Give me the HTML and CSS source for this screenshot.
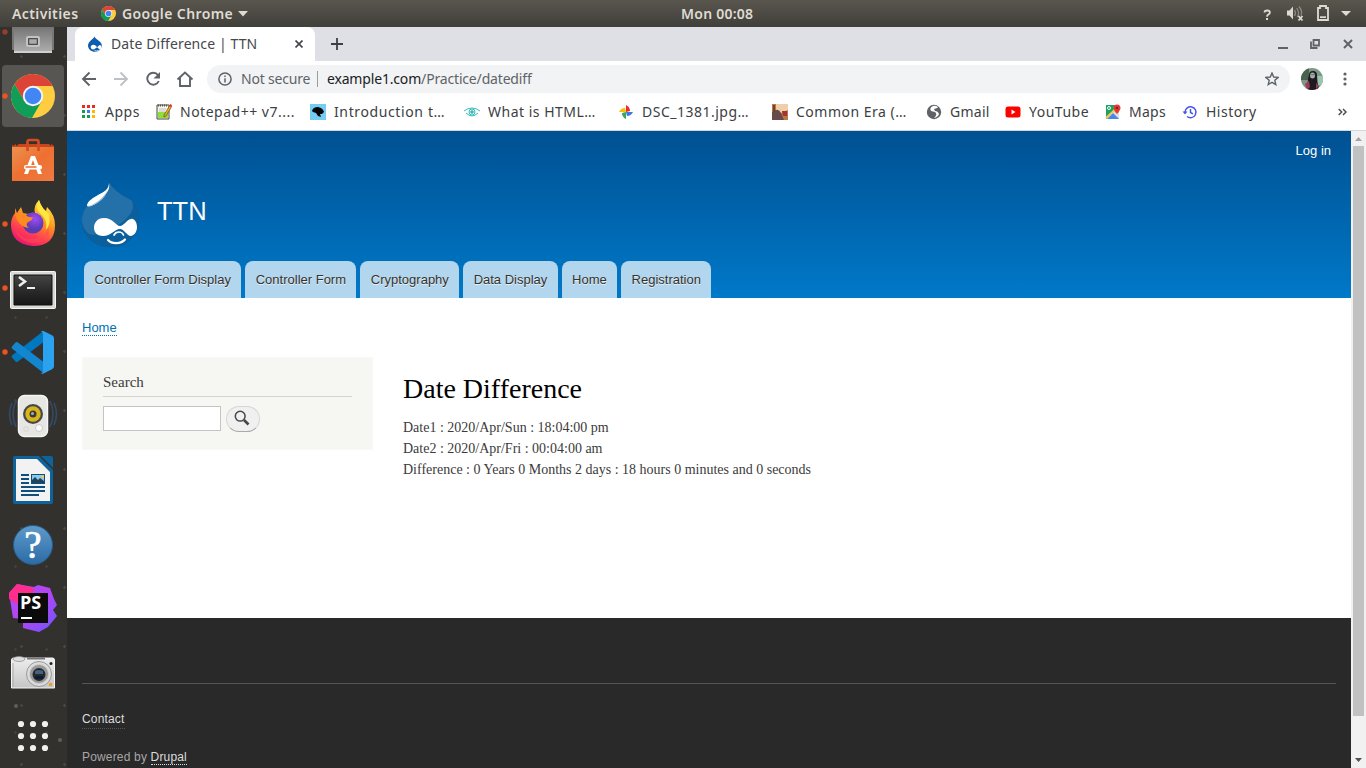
FILE: index.html
```html
<!DOCTYPE html>
<html lang="en">
<head>
<meta charset="utf-8">
<title>Date Difference | TTN</title>
<link rel="stylesheet" href="styles.css">
</head>
<body>
<svg width="0" height="0" class="defs">
  <defs>
    <linearGradient id="gBag" x2="1" y2="1"><stop offset="0" stop-color="#eb9150"/><stop offset=".5" stop-color="#ee7030"/><stop offset="1" stop-color="#ed7a45"/></linearGradient>
    <linearGradient id="gFox" x1=".8" y1="0" x2=".3" y2="1"><stop offset="0" stop-color="#fff44f"/><stop offset=".4" stop-color="#ff9a1f"/><stop offset=".72" stop-color="#ff4050"/><stop offset="1" stop-color="#e81275"/></linearGradient>
    <radialGradient id="gOrb" cx=".6" cy=".3"><stop offset="0" stop-color="#a04cf5"/><stop offset="1" stop-color="#5a3ab5"/></radialGradient>
    <linearGradient id="gTerm" x2="0" y2="1"><stop offset="0" stop-color="#454545"/><stop offset=".5" stop-color="#2b2b2b"/><stop offset="1" stop-color="#161616"/></linearGradient>
    <linearGradient id="gHelp" x2="0" y2="1"><stop offset="0" stop-color="#5e9bcb"/><stop offset="1" stop-color="#2b6ba6"/></linearGradient>
    <linearGradient id="gCam" x2="0" y2="1"><stop offset="0" stop-color="#eee"/><stop offset="1" stop-color="#c5c5c5"/></linearGradient>
    <linearGradient id="gPs" x2="1" y2="1"><stop offset="0" stop-color="#a94df5"/><stop offset=".5" stop-color="#b345f1"/><stop offset="1" stop-color="#6b57ff"/></linearGradient>
    <linearGradient id="gFile" x2="0" y2="1"><stop offset="0" stop-color="#656565"/><stop offset="1" stop-color="#b0b0b0"/></linearGradient>
    <symbol id="chrome" viewBox="0 0 44 44">
      <circle cx="22" cy="22" r="22" fill="#ffcd40"/>
      <path d="M13.300 27 3.700 10A22 22 0 0 0 21 44L30.700 27 22 32Z" fill="#109d58"/>
      <path d="M13.300 27 3.700 10A22 22 0 0 1 41.600 12H22Z" fill="#db4437"/>
      <circle cx="22" cy="22" r="10.200" fill="#f5f5f5"/><circle cx="22" cy="22" r="8.300" fill="#4285f4"/>
    </symbol>
    <symbol id="drop" viewBox="0 0 58 65">
      <path d="M27 1C27 10 18 12 11 18 4 24 0 30 0 38 0 54 13 65 29 65S57 53 57 37C57 27 51 19 44 15 36 10 29 9 27 1Z" fill="#0a5f9c" stroke="#16598d" stroke-width=".6"/>
      <path d="M27 1C27 10 18 12 11 18 4 24 0 30 0 38 0 44 3 49 7 52C14 55 29 49 38 42 49 34 53 26 50 19 47 16 36 13 27 1Z" fill="#2470a9"/>
      <path d="M27 1C27 7 22 10 16 13 9 17 5 20 5 24 9 26 17 20 22 14 26 10 28 6 27 1Z" fill="#fff"/>
      <path d="M5 24c7 0 17-9 20-15-1 8-13 16-20 15Z" fill="#a5c3db"/>
      <path d="M22 36C15 36 12 41 12 46s4 8 9 8c8 0 12-7 17-7 4 0 7 7 11 7 4-1 6-5 6-9 0-5-3-9-6-8-5 1-7 7-11 7S31 36 22 36Z" fill="#fff"/>
      <path d="M32 53c2-4 8-4 9.500 0" fill="none" stroke="#fff" stroke-width="1.700" stroke-linecap="round"/>
      <path d="M26 58c4 4.500 13 4 17-.5" fill="none" stroke="#fff" stroke-width="2.200" stroke-linecap="round"/>
    </symbol>
  </defs>
</svg>

<header class="topbar">
  <span class="activities">Activities</span>
  <svg class="app-icon" width="15" height="15"><use href="#chrome"/></svg>
  <span class="app-name">Google Chrome</span>
  <svg class="caret" width="10" height="6"><path d="M0 0h10L5 5.500Z"/></svg>
  <span class="clock">Mon 00:08</span>
  <svg class="tray" width="106" height="27" viewBox="1260 0 106 27">
    <path d="M1264.500 12.500q0-2 2.700-2t2.700 2.100q0 1.500-2 2.200-.8.400-.8 2" fill="none" stroke="#dfdbd2" stroke-width="1.800"/><path d="M1266 18h2v2h-2z" fill="#dfdbd2"/>
    <path d="M1287 10.500h2.500l3.500-4V19.500l-3.500-4H1287z" fill="#dfdbd2"/>
    <path d="M1294.500 10q2 3 0 6M1296.700 8q3.500 5 .5 9M1299 6.500q4 5 2 9" fill="none" stroke="#8c8982" stroke-width="1.300"/>
    <path d="M1298.500 16l4 4.500m0-4.500l-4 4.500" stroke="#dfdbd2" stroke-width="1.800"/>
    <path d="M1318 8h2V6h6v2h2v12h-10z" fill="none" stroke="#dfdbd2" stroke-width="1.800"/><path d="M1320 16.300h6v1.700h-6z" fill="#dfdbd2"/>
    <path d="M1341 11h10l-5 5z" fill="#dfdbd2"/>
  </svg>
</header>

<div class="desktop">
  <nav class="dock">
    <svg viewBox="0 0 67 64"><circle cx="5" cy="32" r="2.700" fill="#8f4129"/><path d="M12 20h42v30H12z" fill="#777"/><path d="M14 20h38v33H14z" fill="url(#gFile)"/><path d="M14 51h38v2H14z" fill="#d0d0d0"/><rect x="26" y="36" width="14" height="11" rx="2" fill="#c2c2c2"/><rect x="28.700" y="38.700" width="8.600" height="5.600" fill="#aaa" stroke="#333" stroke-width="1"/></svg>
    <svg viewBox="0 0 67 64"><rect x="2" y="1" width="62" height="62" rx="4" fill="#585653"/><circle cx="5" cy="32" r="2.700" fill="#e95420"/><use href="#chrome" x="11" y="10" width="44" height="44"/></svg>
    <svg viewBox="0 0 67 64"><path d="M12 18l1-2v2l3-2v2l3-2h30l2 2v-2l3 2v2H12z" fill="#c8441d"/><path d="M12 19h42v34H12z" fill="url(#gBag)"/><path d="M27.500 23V14q0-2 2-2h7q2 0 2 2v9" fill="none" stroke="#d24d22" stroke-width="2.700"/><path d="M31 28h4l7 18h-4l-5-14-5 14h-4z" fill="#fff"/><rect x="24" y="37" width="18" height="4.500" rx="2" fill="#fff"/><path d="M25.500 39h11" stroke="#ed6a30" stroke-width="1.500"/></svg>
    <svg viewBox="0 0 67 64"><circle cx="5" cy="32" r="2.700" fill="#e95420"/><path d="M15 16l2 5q2-3 4-6l2 6 5 1q4-2 7-1-2-7 4-13 1 7 7 11l1-4q8 8 8 18Q55 54 33 54 11 52 11 33q0-7 4-12z" fill="url(#gFox)"/><circle cx="33" cy="31" r="10.500" fill="url(#gOrb)"/><path d="M15 22q5-2 10 0 3 4 8 3-1 4-5 5-3 3 1 6-8-1-12-8z" fill="#ff8a22"/><path d="M14 34q6 14 19 13Q47 46 48 33q5 17-14 18Q18 51 14 34Z" fill="#ff4b50" opacity=".5"/><path d="M39 8q-5 9 2 14 7 6 5 16 5-5 3-16-7-5-10-14Z" fill="#ffe640"/></svg>
    <svg viewBox="0 0 67 64"><circle cx="5" cy="32" r="2.700" fill="#e95420"/><rect x="10.500" y="15.500" width="45" height="37" rx="1" fill="#d8d8d5" stroke="#f5f5f5"/><path d="M14 19h38v30H14z" fill="url(#gTerm)" stroke="#111"/><path d="M19 25l6 4.500-6 4.500" fill="none" stroke="#eee" stroke-width="2.500" transform="translate(0 -4)"/><path d="M27 31h8v2h-8z" fill="#eee"/></svg>
    <svg viewBox="0 0 67 64"><circle cx="5" cy="32" r="2.700" fill="#e95420"/><path d="M12 37.500l3.500 4q1 1 2.500 0L43.500 22V11L12 35.500q-1 1 0 2Z" fill="#0078bf"/><path d="M12 26.500l3.500-4q1-1 2.500 0L43.500 42v11L12 28.500q-1-1 0-2Z" fill="#1287cf"/><path d="M41 11.500q1-1 3-.3l8 4q2 1 2 3v28q0 2-2 3l-8 4q-2 1-3 0 2 0 2-3V14q0-2-2-2.500Z" fill="#2ba2f0"/></svg>
    <svg viewBox="0 0 67 64"><path d="M16 17q-6 13 0 26M12 19q-5 11 0 22M50 17q6 13 0 26M54 19q5 11 0 22" fill="none" stroke="#344a62" stroke-width="1.700"/><rect x="18.500" y="11.500" width="29" height="41" rx="6" fill="#e6e6e3" stroke="#f6f6f6" stroke-width="1.500"/><circle cx="33" cy="30" r="10" fill="#484848"/><circle cx="33" cy="30" r="7.700" fill="#d9b51c"/><circle cx="33" cy="30" r="3.500" fill="#3a3a3a"/><circle cx="32.500" cy="29.500" r="1.500" fill="#aaa"/><circle cx="39" cy="44" r="3.500" fill="#fafafa" stroke="#bbb" stroke-width=".7"/><path d="M24 43h4v4h-4z" fill="none" stroke="#d6d6d4"/></svg>
    <svg viewBox="0 0 67 64"><path d="M15 8h24l14 14v32q0 2-2 2H15q-2 0-2-2V10q0-2 2-2Z" fill="#0e639b"/><path d="M16 11h21l13 13v29H16z" fill="#f2f2f2"/><path d="M41 8h10q2 0 2 2v10z" fill="#0e639b"/><path d="M21 27h8M21 31h8M21 35h8M21 39h24M21 43h24M21 47h18" stroke="#104f7d" stroke-width="1.900"/><path d="M31 26h14v10H31z" fill="#104f7d"/><path d="M32 27h12v8H32z" fill="#8ac8ed"/><path d="M32 35v-3l3-3 3 3 2-2 4 3v2z" fill="#20435d"/><circle cx="42.500" cy="28.500" r="1.500" fill="#f1c84b"/></svg>
    <svg viewBox="0 0 67 64"><circle cx="33" cy="33" r="19.500" fill="url(#gHelp)" stroke="#275d8d"/><text x="33" y="46" class="help-mark">?</text></svg>
    <svg viewBox="0 0 67 64"><path d="M9 17l8-9 17 3 4-2 12 3 4 11 3 6-4 5 4 6-9 11-9 5-16-4V43l-10-1z" fill="url(#gPs)"/><path d="M9 17l8-9 17 4-2 7-14 9-9-5z" fill="#ff2d8b"/><path d="M18 17h30v30H18z" fill="#0b0b0b"/><text x="20" y="33" class="ps-mark">PS</text><path d="M21 41h11v2H21z" fill="#fff"/></svg>
    <svg viewBox="0 0 67 64"><path d="M11.500 20q0-2 2-2h39q2 0 2 2v28H11.500z" fill="url(#gCam)" stroke="#f5f5f5"/><path d="M27 17.500h18v2H27z" fill="#777"/><ellipse cx="19" cy="19" rx="6" ry="2.500" fill="#ddd" stroke="#888" stroke-width=".7"/><circle cx="39" cy="34" r="12.500" fill="#ddd" stroke="#999"/><circle cx="39" cy="34" r="9.500" fill="#999" stroke="#ccc"/><circle cx="39" cy="34.500" r="6.500" fill="#292929"/><path d="M35 31q4-2 8 0v3h-8z" fill="#3e6386"/><path d="M35 36h8v3h-8z" fill="#0a1c39"/><circle cx="51" cy="23.500" r="1.500" fill="#222"/><path d="M49 43h3v3h-3z" fill="#e9a12b"/><path d="M13 23v24" stroke="#aaa"/></svg>
    <svg viewBox="0 0 67 64"><g fill="#f0f0ee"><circle cx="21" cy="20" r="3.100"/><circle cx="33" cy="20" r="3.100"/><circle cx="45" cy="20" r="3.100"/><circle cx="21" cy="32" r="3.100"/><circle cx="33" cy="32" r="3.100"/><circle cx="45" cy="32" r="3.100"/><circle cx="21" cy="44" r="3.100"/><circle cx="33" cy="44" r="3.100"/><circle cx="45" cy="44" r="3.100"/></g><circle cx="16" cy="2" r="2" fill="#625d57"/><circle cx="60" cy="36" r="2" fill="#625d57"/></svg>
  </nav>

  <div class="window">
    <div class="tabstrip">
      <div class="tab">
        <svg width="14" height="16" viewBox="0 0 58 65"><path d="M27 0C27 10 0 20 0 38 0 54 13 65 29 65S57 53 57 37C57 20 30 14 27 0Z" fill="#0b5fae"/><path d="M22 36c-14 0-14 19-1 19 8 0 12-9 17-8 4 0 7 8 11 8 9-1 8-18 0-18-5 1-7 8-11 8S31 36 22 36Z" fill="#fff"/><path d="M27 60q9 3 17-1" stroke="#fff" stroke-width="3" fill="none"/></svg>
        <span class="tab-title">Date Difference | TTN</span>
        <svg class="tab-close" width="8" height="8"><path d="M.5.500l7 7m0-7l-7 7" stroke="#45484c" stroke-width="1.700"/></svg>
      </div>
      <svg class="new-tab" width="12" height="12"><path d="M6 0v12M0 6h12" stroke="#3c4043" stroke-width="1.800"/></svg>
      <svg class="win-buttons" width="90" height="34" viewBox="1276 27 90 34"><path d="M1278 48h10" stroke="#5f6368" stroke-width="2"/><path d="M1313.500 40h5.500v5.500h-5.500zM1311 41.500v6.500h6.500" fill="none" stroke="#5f6368" stroke-width="1.800"/><path d="M1344 40l8 8m0-8l-8 8" stroke="#5f6368" stroke-width="2"/></svg>
    </div>

    <div class="toolbar">
      <svg class="nav-icons" width="130" height="36" viewBox="77 61 130 36" fill="none" stroke="#5f6368" stroke-width="1.900"><path d="M96 79H83.500M89.500 72.500L83 79l6.500 6.500"/><path d="M114 79h12.500M120.500 72.500L127 79l-6.500 6.500" stroke="#bdc1c6"/><path d="M158 75a6 6 0 1 0 .8 6"/><path d="M160 72v6.500h-6.500z" fill="#5f6368" stroke="none"/><path d="M177.500 79.500l7.500-7 7.500 7M180 78v8h10v-8" /></svg>
      <div class="omnibox">
        <svg class="info" width="14" height="14" fill="none" stroke="#5f6368" stroke-width="1.500"><circle cx="7" cy="7" r="6.100"/><path d="M7 6.200v4.300M7 3.500v1.500"/></svg>
        <span class="secure">Not secure</span>
        <span class="url"><b>example1.com</b>/Practice/datediff</span>
        <svg class="star" width="14" height="14" viewBox="0 0 14 14"><path d="M7 1l1.700 4 4.500.4-3.400 2.900 1 4.300L7 10.300 3.200 12.600l1-4.300L.8 5.400 5.300 5z" fill="none" stroke="#5f6368" stroke-width="1.400"/></svg>
      </div>
      <svg class="avatar" width="22" height="22" viewBox="0 0 22 22"><clipPath id="av"><circle cx="11" cy="11" r="11"/></clipPath><g clip-path="url(#av)"><path d="M0 0h22v22H0z" fill="#7d9784"/><path d="M0 0h8v12H0z" fill="#49634f"/><path d="M15 8h7v9h-7z" fill="#9cc4b0"/><path d="M7 22Q6 13 8 7q0-4 4-4t4 4q0 7 2 15z" fill="#1f1a20"/><ellipse cx="11.500" cy="7.500" rx="2.500" ry="3" fill="#b3a7a2"/><path d="M9 6h5v1.300H9z" fill="#4b8da0"/><path d="M4 16l4-3 1 6-3 3zM15 15l3 3-3 3z" fill="#9c3b5c"/></g></svg>
      <svg class="dots" width="4" height="14" fill="#5f6368"><circle cx="2" cy="2" r="1.600"/><circle cx="2" cy="7" r="1.600"/><circle cx="2" cy="12" r="1.600"/></svg>
    </div>

    <div class="bookmarks">
      <span class="bm w-apps"><svg viewBox="0 0 16 16"><path d="M1 1h3v3H1zM6 1h3v3H6zM11 1h3v3h-3z" fill="#e82c24"/><path d="M1 6h3v3H1zM1 11h3v3H1zM6 11h3v3H6z" fill="#149b51"/><path d="M6 6h3v3H6z" fill="#3b7ded"/><path d="M11 6h3v3h-3zM11 11h3v3h-3z" fill="#f7b90a"/></svg><i>Apps</i></span>
      <span class="bm w-note"><svg viewBox="0 0 16 16"><path d="M1 1h12v14H1z" fill="#f5f5e8" stroke="#444"/><path d="M2 8h10v6H2z" fill="#8ede3c"/><path d="M2 1.500h10" stroke="#555" stroke-width="2" stroke-dasharray="1 1"/><path d="M3 5h7M3 7h6" stroke="#aaa" stroke-width=".7"/><path d="M14 1l2 1-6 10-2 1V11z" fill="#e7ae22" stroke="#5b3b1b" stroke-width=".6"/><path d="M14 0l2 1-1 2-2-1z" fill="#e33"/></svg><i>Notepad++ v7....</i></span>
      <span class="bm w-intro"><svg viewBox="0 0 16 16"><path d="M0 0h16v16H0z" fill="#73cdf5"/><path d="M2 7q1-4 6-4 5 1 6 5l-2 2-2 0 1 3-3-1-2-3-3-1z" fill="#050505"/></svg><i>Introduction t…</i></span>
      <span class="bm w-html"><svg viewBox="0 0 16 16" fill="none" stroke="#36bdb9"><path d="M0 7q8-6 16 0M2 9q6 6 12 0"/><circle cx="8" cy="8" r="3"/><circle cx="8" cy="8" r="1.300" fill="#36bdb9"/></svg><i>What is HTML…</i></span>
      <span class="bm w-dsc"><svg viewBox="0 0 16 16"><path d="M8 8V1q4 2 4 6z" fill="#ea2e26"/><path d="M8 8h7q-2 4-6 4z" fill="#3b79e8"/><path d="M8 8v7q-4-2-4-6z" fill="#38a852"/><path d="M8 8H1q2-4 6-4z" fill="#fbbc05"/></svg><i>DSC_1381.jpg…</i></span>
      <span class="bm w-era"><svg viewBox="0 0 16 16"><path d="M0 0h16v16H0z" fill="#b77b49"/><path d="M4 0h12v6L9 9 4 6z" fill="#edcfaa"/><path d="M0 8q6-5 9 1l3 7H0z" fill="#674a49"/><path d="M10 7h5v5h-4z" fill="#a83232"/><path d="M1 1h2v7H1z" fill="#744126"/></svg><i>Common Era (…</i></span>
      <span class="bm w-gmail"><svg viewBox="0 0 16 16"><circle cx="8" cy="8" r="7.200" fill="#5f6368"/><path d="M7 2Q3 4 5 7l4 1q3 2-1 6 4-1 5-4-1-3-4-3L8 5q4-1 4-2-3-2-5-1z" fill="#fff"/></svg><i>Gmail</i></span>
      <span class="bm w-tube"><svg viewBox="0 0 16 16"><rect x=".5" y="2.500" width="15" height="11" rx="2.500" fill="#f00"/><path d="M6.500 5.500l4 2.500-4 2.500z" fill="#fff"/></svg><i>YouTube</i></span>
      <span class="bm w-maps"><svg viewBox="0 0 16 16"><path d="M1 1h13v14H1z" fill="#dedede"/><path d="M1 1h9L8 8l-7 7z" fill="#1ca261"/><path d="M2 15l6-6 6 6z" fill="#4886ed"/><path d="M1 14L13 3" stroke="#f7cb4b" stroke-width="2"/><path d="M12 10Q8.500 6 8.500 4a3.500 3.500 0 0 1 7 0q0 2-3.500 6z" fill="#e53935"/><circle cx="12" cy="4" r="1.300" fill="#8b1e1e"/><circle cx="4" cy="4" r="1.500" fill="none" stroke="#fff"/></svg><i>Maps</i></span>
      <span class="bm w-hist"><svg viewBox="0 0 16 16" fill="none" stroke="#4355ea" stroke-width="1.500"><path d="M3 8a5.500 5.500 0 1 1 2 4.500M8.500 5v3.500l2.500 1.300"/><path d="M.5 7.500h5L3 10.500z" fill="#4355ea" stroke="none"/></svg><i>History</i></span>
      <svg class="more" width="9" height="8"><path d="M.7 1l3 3-3 3M5 1l3 3-3 3" fill="none" stroke="#4b4e52" stroke-width="1.500"/></svg>
    </div>

    <div class="viewport">
      <main class="page">
        <div class="header">
          <a class="login">Log in</a>
          <div class="brand"><svg width="58" height="65"><use href="#drop"/></svg><span>TTN</span></div>
          <nav class="menu"><a>Controller Form Display</a><a>Controller Form</a><a>Cryptography</a><a>Data Display</a><a>Home</a><a>Registration</a></nav>
        </div>
        <div class="main">
          <div class="crumb"><a>Home</a></div>
          <div class="columns">
            <aside class="search">
              <h2>Search</h2>
              <div class="search-form"><input type="text"><button><svg width="16" height="16" fill="none" stroke="#464646"><circle cx="6.200" cy="6.200" r="4.900" stroke-width="1.500"/><path d="M10 10l4.500 4.500" stroke-width="2.600"/></svg></button></div>
            </aside>
            <article>
              <h1>Date Difference</h1>
              <p>Date1 : 2020/Apr/Sun : 18:04:00 pm<br>Date2 : 2020/Apr/Fri : 00:04:00 am<br>Difference : 0 Years 0 Months 2 days : 18 hours 0 minutes and 0 seconds</p>
            </article>
          </div>
        </div>
        <footer>
          <div class="contact"><a>Contact</a></div>
          <div class="powered">Powered by <a>Drupal</a></div>
        </footer>
      </main>
      <div class="scrollbar">
        <svg width="15" height="15"><path d="M4 10h7L7.500 6z" fill="#a3a3a3"/></svg>
        <div class="thumb"></div>
        <svg width="15" height="15"><path d="M4 5h7L7.500 9z" fill="#505050"/></svg>
      </div>
    </div>
  </div>
</div>
</body>
</html>
```
FILE: styles.css
```css
* { box-sizing: border-box; }
body { margin: 0; width: 1366px; height: 768px; overflow: hidden; font-family: "Noto Sans", sans-serif; display: flex; flex-direction: column; }
svg { display: block; flex: none; }
.defs { position: absolute; }
a { text-decoration: none; }

.topbar { height: 27px; flex: none; background: linear-gradient(#59564e, #403f3a); color: #dfdbd2; display: grid; grid-template-columns: 89px 33px 116px 443px auto 1fr; align-items: center; font-size: 14px; font-weight: 600; line-height: 27px; white-space: nowrap; }
.activities { padding-left: 12px; letter-spacing: .4px; }
.app-icon { margin-left: 12px; }
.app-name { letter-spacing: .4px; }
.caret { fill: #dfdbd2; }
.clock { letter-spacing: .25px; }
.tray { justify-self: end; }

.desktop { display: flex; height: 741px; }
.dock { width: 67px; height: 741px; flex: none; overflow: hidden; background-color: #33312e; background-image: radial-gradient(circle, #4b4844 1px, transparent 1.5px), radial-gradient(circle, #44413e 1px, transparent 1.5px); background-size: 43px 59px, 31px 83px; display: flex; flex-direction: column; justify-content: flex-end; }
.dock svg { width: 67px; height: 64px; }
.help-mark { font: 39px "Liberation Serif", serif; fill: #fff; stroke: #fff; stroke-width: .7px; text-anchor: middle; }
.ps-mark { font: bold 18px "Open Sans", sans-serif; fill: #fff; }

.window { flex: 1; display: flex; flex-direction: column; background: #fff; min-width: 0; }
.tabstrip { height: 34px; background: #dee0e6; padding-left: 8px; display: flex; align-items: center; }
.tab { width: 240px; height: 34px; background: #fff; border-radius: 8px 8px 0 0; display: flex; align-items: center; padding: 0 12px 0 13px; color: #45484c; font-size: 14px; white-space: nowrap; }
.tab-title { margin: -2px 0 0 9px; letter-spacing: .1px; }
.tab-close { margin-left: auto; }
.new-tab { margin-left: 16px; }
.win-buttons { margin-left: auto; }

.toolbar { height: 36px; display: flex; align-items: center; padding-left: 10px; }
.omnibox { width: 1083px; height: 28px; border-radius: 14px; background: #f1f3f4; display: flex; align-items: center; padding: 0 11px; font-size: 14px; color: #5f6368; white-space: nowrap; }
.secure { width: 77px; margin-left: 9px; border-right: 1px solid #9a9da1; line-height: 16px; letter-spacing: -.2px; }
.url { margin: -2px 0 0 9px; letter-spacing: -.17px; }
.url b { font-weight: 400; color: #202124; }
.star { margin-left: auto; }
.avatar { margin-left: 11px; }
.dots { margin-left: 20px; }

.bookmarks { height: 34px; border-bottom: 1px solid #d4d6db; display: flex; align-items: center; gap: 16px; padding: 0 19px 4px 14px; color: #3c4043; font-size: 14px; }
.bm { display: flex; gap: 8px; white-space: nowrap; flex: none; }
.bm svg { width: 16px; height: 16px; align-self: center; }
.bm i { font-style: normal; line-height: 20px; letter-spacing: .5px; }
.w-apps { width: 59px; }
.w-note, .w-intro, .w-html, .w-dsc, .w-era { width: 138px; }
.w-gmail { width: 63px; }
.w-gmail i, .w-maps i { letter-spacing: .25px; }
.w-intro i { letter-spacing: .62px; }
.w-tube { width: 84px; }
.w-maps { width: 61px; }
.w-hist { width: 75px; }
.more { margin-left: auto; }

.viewport { display: flex; height: 637px; }
.page { flex: 1; font-family: "Liberation Sans", Arial, sans-serif; overflow: hidden; }
.header { height: 167px; background: linear-gradient(#005091, #0079c9); padding: 0 20px 0 15px; display: flex; flex-direction: column; color: #fff; }
.login { align-self: flex-end; font-size: 13px; line-height: 20px; margin-top: 10px; height: 22px; }
.brand { display: flex; gap: 17px; height: 65px; margin-top: 19px; }
.brand span { font-size: 25.5px; line-height: 30px; margin-top: 14px; }
.menu { display: flex; gap: 4px; margin: auto 0 0 2px; }
.menu a { height: 37px; line-height: 37px; padding: 0 10.4px; background: #b2d6ed; border-radius: 8px 8px 0 0; font-size: 13px; color: #333; text-shadow: 0 1px #eee; }
.main { height: 320px; padding: 20px 15px 0; }
.crumb { height: 39px; font-size: 13px; line-height: 20px; }
.crumb a { color: #0071b3; border-bottom: 1px dotted #0071b3; }
.columns { display: flex; gap: 30px; font-family: "Liberation Serif", serif; color: #3b3b3b; }
.search { width: 291px; height: 93px; border: 1px solid #f9f9f6; background: #f6f6f2; padding: 14px 20px; }
.search h2 { margin: 0 0 9px; height: 25px; border-bottom: 1px solid #d3d3d1; font-weight: 400; font-size: 15px; line-height: 20px; }
.search-form { display: flex; gap: 5px; }
.search input { width: 118px; height: 25px; border: 1px solid #c4c4c4; background: #fff; padding: 0; }
.search button { width: 34px; height: 26px; padding: 3px 7px 5px; border: 1px solid #d6d6d6; border-bottom-color: #aaa; border-radius: 13px; background: #f0f0f0; }
article h1 { margin: 15px 0 12px; font-size: 28px; font-weight: 400; line-height: 33px; color: #000; }
article p { margin: 0; font-size: 14px; line-height: 21px; }
footer { height: 150px; background: #292929; padding: 65px 15px 0; font-size: 12px; letter-spacing: .17px; color: #a7a7a7; }
.contact { border-top: 1px solid #555; padding-top: 25px; height: 64px; line-height: 20px; }
.contact a { color: #ddd; border-bottom: 1px dotted #555; padding-bottom: 2px; }
.powered { line-height: 20px; }
.powered a { color: #ddd; border-bottom: 1px dotted #ddd; }
.scrollbar { width: 15px; background: #f1f1f1; display: flex; flex-direction: column; }
.thumb { height: 570px; margin: 0 2px 0 2px; background: #c1c1c1; }
.scrollbar svg:last-child { margin-top: auto; }
```
